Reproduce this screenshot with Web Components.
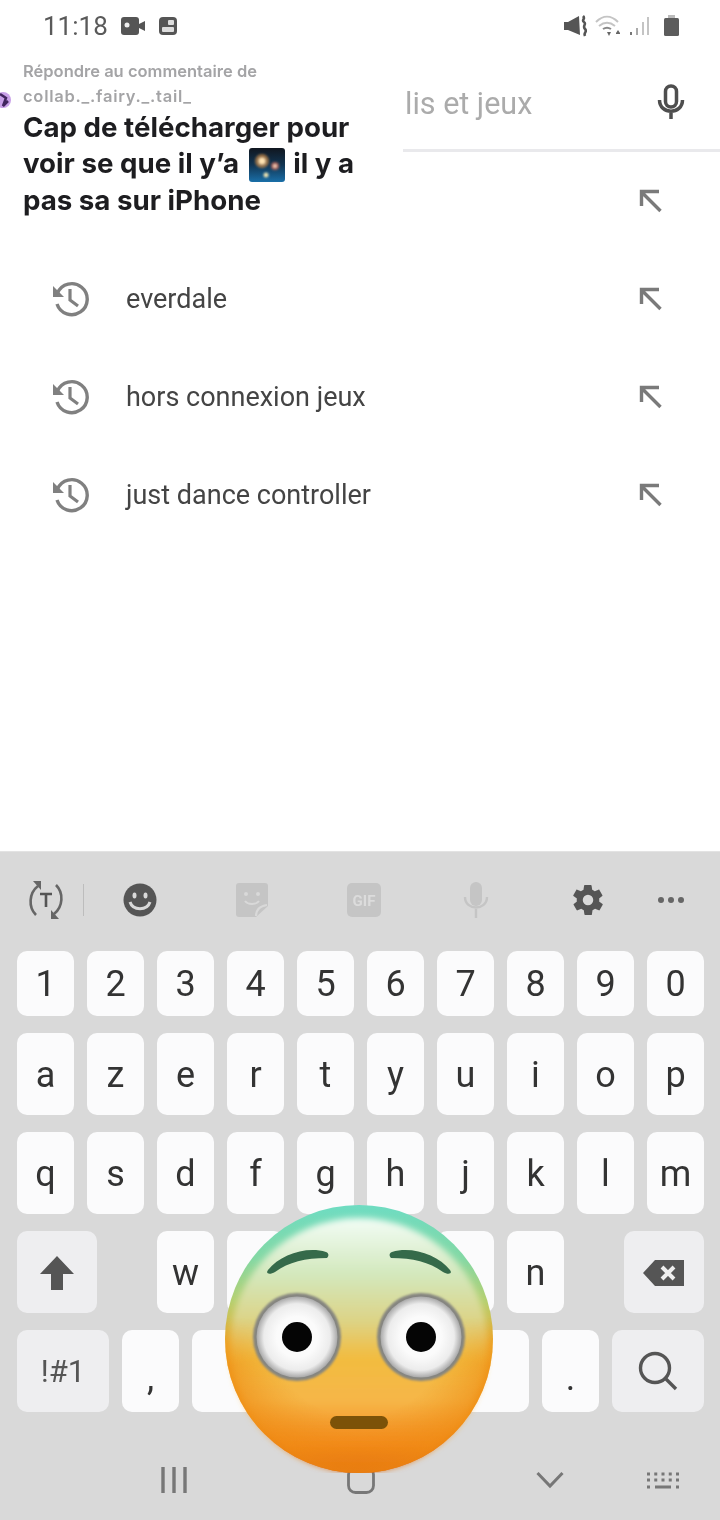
<!DOCTYPE html>
<html>
<head>
<meta charset="utf-8">
<style>
  html, body { margin: 0; padding: 0; background: #fff; }
  body { width: 720px; height: 1520px; overflow: hidden; display: flex; flex-direction: column; position: relative; font-family: Roboto, "Liberation Sans", sans-serif; filter: blur(.45px); }
  key-board { margin-top: auto; }
</style>
</head>
<body>
<status-bar></status-bar>
<search-bar>lis et jeux</search-bar>
<history-row></history-row>
<history-row icon>everdale</history-row>
<history-row icon>hors connexion jeux</history-row>
<history-row icon>just dance controller</history-row>
<key-board></key-board>
<comment-sticker></comment-sticker>
<emoji-face></emoji-face>

<script>
class StatusBar extends HTMLElement {
    constructor() {
        super();
        this.attachShadow({ mode: 'open' });
        this.shadowRoot.innerHTML = `
            <style>
                :host { display: flex; align-items: center; height: 52px; padding: 0 41px 0 43px; color: #555; }
                .time { font-size: 26px; line-height: 1; margin-right: 13px; color: #5a5a5a; }
                svg { display: block; }
                .right { margin-left: auto; display: flex; align-items: center; }
            </style>
            <span class="time">11:18</span>
            <svg width="25" height="18" viewBox="0 0 25 18" style="margin-right:13px">
                <rect x="0" y="0" width="18" height="18" rx="3" fill="#555"/>
                <circle cx="6" cy="8" r="2.5" fill="#eee"/>
                <path d="M18 7l6-3v10l-6-3z" fill="#555"/>
            </svg>
            <svg width="18" height="18" viewBox="0 0 18 18">
                <rect width="18" height="18" rx="4" fill="#555"/>
                <rect x="3" y="10" width="12" height="5" rx="1" fill="#ddd"/>
                <rect x="9" y="3" width="6" height="5" rx="1" fill="#ddd"/>
            </svg>
            <div class="right">
                <svg width="24" height="22" viewBox="0 0 24 22" style="margin-right:8px">
                    <path d="M1 7h4L16 1l1 19L5 15H1z" fill="#555"/>
                    <path d="M20 1c3 3-2 4 1 6s-2 4 1 7-2 3 0 7" fill="none" stroke="#555" stroke-width="2.600"/>
                </svg>
                <svg width="28" height="22" viewBox="0 0 28 22" style="margin-right:6px">
                    <path d="M1 7c7-7 15-7 22 0M4 11c5-4 11-4 16 0" fill="none" stroke="#c4c4c4" stroke-width="2"/>
                    <path d="M8 14c3-2 5-2 8 0" fill="none" stroke="#888" stroke-width="2"/>
                    <path d="M12 17h4l-2 4zM21 18l2-3 2 3zM21 18h4v1h-4z" fill="#666"/>
                </svg>
                <svg width="21" height="22" viewBox="0 0 21 22" style="margin-right:14px">
                    <rect x="1" y="17" width="2" height="3" fill="#777"/>
                    <rect x="7" y="13" width="2" height="7" fill="#aaa"/>
                    <rect x="13" y="7" width="2" height="13" fill="#c4c4c4"/>
                    <rect x="18" y="2" width="2" height="18" fill="#c4c4c4"/>
                </svg>
                <svg width="15" height="22" viewBox="0 0 15 22">
                    <path d="M4 0h7v3H4z" fill="#bbb"/>
                    <rect x="0" y="3" width="15" height="18" rx="1.500" fill="#5c5c5c"/>
                </svg>
            </div>
        `;
    }
}

class SearchBar extends HTMLElement {
    constructor() {
        super();
        this.attachShadow({ mode: 'open' });
        this.shadowRoot.innerHTML = `
            <style>
                :host { display: flex; align-items: center; box-sizing: border-box; height: 100px; margin-left: 403px; padding: 5px 35px 0 2px; border-bottom: 3px solid #e9e9ec; color: #ababab; font-size: 30.500px; }
                svg { margin-left: auto; margin-top: -2px; display: block; }
            </style>
            <slot></slot>
            <svg width="28" height="36" viewBox="0 0 28 36">
                <rect x="8.500" y="2" width="11" height="21" rx="5.500" fill="none" stroke="#4e4e4e" stroke-width="3.500"/>
                <path d="M2.500 16c0 15 23 15 23 0M14 27v8" fill="none" stroke="#4e4e4e" stroke-width="3.500"/>
            </svg>
        `;
    }
}

class HistoryRow extends HTMLElement {
    constructor() {
        super();
        this.attachShadow({ mode: 'open' });
        const clock = this.hasAttribute('icon') ? `
            <svg class="clock" width="38" height="36" viewBox="0 0 38 36">
                <path d="M6.500 12A15.500 15.500 0 1 1 6 23" fill="none" stroke="#808080" stroke-width="3.400"/>
                <path d="M2 5v11h11z" fill="#808080"/>
                <path d="M19 8v11l8 6" fill="none" stroke="#808080" stroke-width="3.200"/>
            </svg>` : '';
        this.shadowRoot.innerHTML = `
            <style>
                :host { display: flex; align-items: center; height: 98px; padding: 0 57px 0 51px; color: #444; font-size: 27px; }
                .clock { width: 38px; margin-right: 37px; flex: none; }
                .go { margin-left: auto; display: block; }
            </style>
            ${clock}
            <slot></slot>
            <svg class="go" width="24" height="24" viewBox="0 0 24 24">
                <path d="M21.500 22L3 3.500M2.500 17V2.500H20" fill="none" stroke="#7a7a7a" stroke-width="3.400"/>
            </svg>
        `;
    }
}

class CommentSticker extends HTMLElement {
    constructor() {
        super();
        this.attachShadow({ mode: 'open' });
        this.shadowRoot.innerHTML = `
            <style>
                :host { display: block; position: absolute; left: 0; top: 56px; width: 403px; height: 160px; background: #fff; box-sizing: border-box; padding: 3px 40px 0 23px; font-family: Inter, Lato, sans-serif; }
                .to { font-size: 16.500px; line-height: 25px; font-weight: 600; color: #a4a4a6; white-space: nowrap; }
                .to span { letter-spacing: .75px; }
                .body { font-size: 27.700px; line-height: 36px; font-weight: 700; color: #1d1d20; white-space: nowrap; }
                .body svg { vertical-align: -9px; margin: 0 2px 0 3px; }
                .avatar { position: absolute; left: -6px; top: 35px; }
            </style>
            <svg class="avatar" width="18" height="18" viewBox="0 0 18 18">
                <circle cx="9" cy="9" r="8" fill="#c8a0e8"/>
                <path d="M6 3l6 4-3 8 5-5" fill="none" stroke="#41255e" stroke-width="2.500"/>
            </svg>
            <div class="to">Répondre au commentaire de<br><span>collab._.fairy._.tail_</span></div>
            <div class="body">Cap de télécharger pour<br>voir se que il y’a <svg width="36" height="34" viewBox="0 0 36 34">
                <defs>
                    <linearGradient id="sky" x1="0" y1="0" x2="0" y2="1"><stop offset="0" stop-color="#10161f"/><stop offset=".5" stop-color="#113553"/><stop offset="1" stop-color="#1a6fa8"/></linearGradient>
                    <filter id="glow"><feGaussianBlur stdDeviation="1.200"/></filter>
                </defs>
                <rect width="36" height="34" rx="3" fill="url(#sky)"/>
                <g filter="url(#glow)">
                    <circle cx="13" cy="13" r="7" fill="#c98a4a" opacity=".7"/>
                    <circle cx="13" cy="13" r="3.500" fill="#ffe2b0"/>
                    <circle cx="26" cy="18" r="4" fill="#c76a5a" opacity=".8"/>
                    <circle cx="26" cy="18" r="1.800" fill="#ffd9c0"/>
                    <circle cx="17" cy="27" r="2.500" fill="#e8e0b0"/>
                </g>
            </svg> il y a<br>pas sa sur iPhone</div>
        `;
    }
}

class KbKey extends HTMLElement {
    constructor() {
        super();
        this.attachShadow({ mode: 'open' });
        this.shadowRoot.innerHTML = `
            <style>
                :host { display: flex; flex: none; align-items: center; justify-content: center; width: 57px; box-sizing: border-box; background: #fbfbfc; border-radius: 10px; color: #333; font-size: 36px; }
                :host([fn]) { background: #eeeef0; color: #555; }
                :host([low]) { align-items: flex-end; padding-bottom: 16px; line-height: 1; }
            </style>
            <slot></slot>
        `;
    }
}

class KeyBoard extends HTMLElement {
    constructor() {
        super();
        this.attachShadow({ mode: 'open' });
        const keys = (s) => s.split('').map((c) => `<kb-key>${c}</kb-key>`).join('');
        this.shadowRoot.innerHTML = `
            <style>
                :host { display: block; height: 669px; background: #d9d9d9; border-top: 1px solid #e3e3e3; box-sizing: border-box; }
                .tools { display: flex; align-items: center; box-sizing: border-box; height: 99px; padding: 0 0 4px 27px; }
                .tools svg { display: block; flex: none; }
                .row { display: flex; gap: 13px; padding: 0 16px 0 17px; height: 82px; margin-bottom: 17px; }
                .row.nums { height: 65px; }
                .row.letters kb-key { padding-top: 2px; }
                .shift, .del { width: 80px; }
                .sym, .srch { width: 92px; }
                .space { width: 337px; }
                .skip { width: 34px; flex: none; }
                .nav { display: flex; align-items: center; height: 90px; margin-top: 23px; }
                .nav svg { display: block; flex: none; }
            </style>
            <div class="tools">
                <svg width="38" height="40" viewBox="0 0 38 40">
                    <path d="M11 6C2 13 1 27 9 35M27 34c9-7 10-21 2-29" fill="none" stroke="#666" stroke-width="2.600"/>
                    <path d="M6 1h8v9zM32 39h-8v-9z" fill="#666"/>
                    <path d="M13 14h12M19 14v13" fill="none" stroke="#555" stroke-width="2.600"/>
                </svg>
                <div style="width:1px;height:32px;background:#bdbdbd;margin:0 39px 0 18px"></div>
                <svg width="34" height="34" viewBox="0 0 34 34" style="margin-right:78px">
                    <circle cx="17" cy="17" r="16.500" fill="#555"/>
                    <ellipse cx="11.500" cy="12.500" rx="2" ry="3" fill="#d9d9d9"/>
                    <ellipse cx="22.500" cy="12.500" rx="2" ry="3" fill="#d9d9d9"/>
                    <path d="M7 19c3 9 17 9 20 0" fill="none" stroke="#d9d9d9" stroke-width="3"/>
                </svg>
                <svg width="34" height="36" viewBox="0 0 34 36" style="margin-right:78px">
                    <path d="M4 1h26a3 3 0 0 1 3 3v20L21 35H4a3 3 0 0 1-3-3V4a3 3 0 0 1 3-3z" fill="#c5c5c5"/>
                    <circle cx="11" cy="12" r="2" fill="#d9d9d9"/><circle cx="23" cy="12" r="2" fill="#d9d9d9"/>
                    <path d="M10 19c3 4 11 4 14 0M21 34c0-6 4-10 11-11" fill="none" stroke="#d9d9d9" stroke-width="2"/>
                </svg>
                <svg width="34" height="34" viewBox="0 0 34 34" style="margin-right:81px">
                    <rect width="34" height="34" rx="5" fill="#c5c5c5"/>
                    <text x="17" y="23" text-anchor="middle" font-family="Roboto, sans-serif" font-weight="700" font-size="15" fill="#dcdcdc">GIF</text>
                </svg>
                <svg width="28" height="36" viewBox="0 0 28 36" style="margin-right:80px">
                    <rect x="8" y="0" width="12" height="24" rx="6" fill="#c5c5c5"/>
                    <path d="M3 15c0 14 22 14 22 0M14 27v9" fill="none" stroke="#c5c5c5" stroke-width="2.400"/>
                </svg>
                <svg width="36" height="36" viewBox="0 0 24 24" style="margin-right:51px">
                    <path fill="#555" d="M19.400 13c.1-.3.1-.7.1-1s0-.7-.1-1l2.100-1.600c.2-.2.2-.4.100-.6l-2-3.500c-.1-.2-.4-.3-.6-.2l-2.500 1c-.5-.4-1.100-.7-1.700-1l-.4-2.600c0-.3-.2-.5-.5-.5h-4c-.3 0-.5.2-.5.400l-.4 2.700c-.6.200-1.200.6-1.700 1l-2.500-1c-.2-.1-.5 0-.6.200l-2 3.500c-.1.200-.1.400.1.600L4.600 11c-.1.300-.1.700-.1 1s0 .7.100 1l-2.100 1.600c-.2.200-.2.400-.1.600l2 3.500c.1.200.4.300.6.200l2.500-1c.5.400 1.100.7 1.700 1l.4 2.600c0 .3.200.5.500.5h4c.3 0 .5-.2.500-.4l.4-2.700c.6-.2 1.200-.6 1.700-1l2.500 1c.2.100.5 0 .6-.2l2-3.500c.1-.2.1-.4-.1-.6zM12 15.500a3.500 3.500 0 1 1 0-7 3.500 3.500 0 0 1 0 7z"/>
                </svg>
                <svg width="28" height="8" viewBox="0 0 28 8">
                    <circle cx="4" cy="4" r="3" fill="#666"/><circle cx="14" cy="4" r="3" fill="#666"/><circle cx="24" cy="4" r="3" fill="#666"/>
                </svg>
            </div>
            <div class="row nums">${keys('1234567890')}</div>
            <div class="row letters">${keys('azertyuiop')}</div>
            <div class="row letters">${keys('qsdfghjklm')}</div>
            <div class="row letters">
                <kb-key fn class="shift">
                    <svg width="36" height="36" viewBox="0 0 36 36"><path d="M18 1L1 19h11v16h12V19h11z" fill="#555"/></svg>
                </kb-key>
                <div class="skip"></div>
                <kb-key>w</kb-key>
                <kb-key></kb-key><kb-key></kb-key><kb-key></kb-key><kb-key></kb-key>
                <kb-key>n</kb-key>
                <div class="skip"></div>
                <kb-key fn class="del">
                    <svg width="42" height="26" viewBox="0 0 42 26"><path d="M12 0h29v26H12L0 13z" fill="#555"/><path d="M19 7l12 12M31 7L19 19" fill="none" stroke="#eee" stroke-width="4"/></svg>
                </kb-key>
            </div>
            <div class="row">
                <kb-key fn class="sym" style="font-size:31px">!#1</kb-key>
                <kb-key low>,</kb-key>
                <kb-key class="space"></kb-key>
                <kb-key low>.</kb-key>
                <kb-key fn class="srch">
                    <svg width="40" height="40" viewBox="0 0 40 40"><circle cx="17" cy="17" r="14.500" fill="none" stroke="#555" stroke-width="3.400"/><path d="M27 27l11 11" fill="none" stroke="#555" stroke-width="3.400"/></svg>
                </kb-key>
            </div>
            <div class="nav">
                <svg width="26" height="26" viewBox="0 0 26 26" style="margin-left:161px">
                    <path d="M2 0v26M13 0v26M24 0v26" fill="none" stroke="#777" stroke-width="3.400"/>
                </svg>
                <svg width="28" height="28" viewBox="0 0 28 28" style="margin-left:160px">
                    <rect x="1.500" y="1.500" width="25" height="25" rx="7" fill="none" stroke="#777" stroke-width="2.800"/>
                </svg>
                <svg width="28" height="18" viewBox="0 0 28 18" style="margin-left:161px">
                    <path d="M1.500 2L14 15 26.500 2" fill="none" stroke="#777" stroke-width="3"/>
                </svg>
                <svg width="34" height="18" viewBox="0 0 34 18" style="margin-left:82px">
                    <path d="M1 3h32M1 9h32" fill="none" stroke="#777" stroke-width="3" stroke-dasharray="3 4.250"/>
                    <path d="M1 16h3M9 16h16M30 16h3" fill="none" stroke="#777" stroke-width="3"/>
                </svg>
            </div>
        `;
    }
}

class EmojiFace extends HTMLElement {
    constructor() {
        super();
        this.attachShadow({ mode: 'open' });
        const eye = (x) => `
            <circle cx="${x}" cy="1337" r="44" fill="#858580" filter="url(#edge)"/>
            <circle cx="${x}" cy="1337" r="40.500" fill="url(#ball)"/>
            <circle cx="${x}" cy="1337" r="15" fill="#050505"/>`;
        this.shadowRoot.innerHTML = `
            <style>
                :host { display: block; position: absolute; left: 225px; top: 1205px; width: 268px; height: 268px; }
                svg { display: block; }
            </style>
            <svg width="268" height="268" viewBox="225 1205 268 268">
                <defs>
                    <linearGradient id="rim" x1="0" y1="0" x2="0" y2="1">
                        <stop offset="0" stop-color="#6edcc2"/>
                        <stop offset=".2" stop-color="#84d8a4"/>
                        <stop offset=".36" stop-color="#b5cf6e"/>
                        <stop offset=".52" stop-color="#eeaa2a"/>
                        <stop offset=".8" stop-color="#f59a1e"/>
                        <stop offset="1" stop-color="#d95a0c"/>
                    </linearGradient>
                    <linearGradient id="skin" x1="0" y1="0" x2="0" y2="1">
                        <stop offset="0" stop-color="#f2fdf6"/>
                        <stop offset=".22" stop-color="#d3e8bd"/>
                        <stop offset=".4" stop-color="#dcd488"/>
                        <stop offset=".55" stop-color="#f2bc40"/>
                        <stop offset=".72" stop-color="#f6b648"/>
                        <stop offset=".9" stop-color="#f4871a"/>
                        <stop offset="1" stop-color="#da5c0c"/>
                    </linearGradient>
                    <radialGradient id="ball">
                        <stop offset=".5" stop-color="#fbfbfb"/>
                        <stop offset=".82" stop-color="#ececec"/>
                        <stop offset="1" stop-color="#a9a9a9"/>
                    </radialGradient>
                    <radialGradient id="shade" cx=".5" cy=".45" r=".55">
                        <stop offset=".62" stop-color="#ee9015" stop-opacity="0"/>
                        <stop offset="1" stop-color="#ee8a12" stop-opacity=".75"/>
                    </radialGradient>
                    <linearGradient id="lower" x1="0" y1="0" x2="0" y2="1">
                        <stop offset=".42" stop-color="#fff" stop-opacity="0"/>
                        <stop offset=".6" stop-color="#fff"/>
                    </linearGradient>
                    <mask id="lowerMask"><rect x="225" y="1205" width="268" height="268" fill="url(#lower)"/></mask>
                    <filter id="soft"><feGaussianBlur stdDeviation="3"/></filter>
                    <filter id="edge"><feGaussianBlur stdDeviation="1"/></filter>
                </defs>
                <circle cx="359" cy="1339" r="134" fill="url(#rim)"/>
                <ellipse cx="359" cy="1345" rx="129" ry="127" fill="url(#skin)" filter="url(#soft)"/>
                <circle cx="359" cy="1339" r="134" fill="url(#shade)" mask="url(#lowerMask)"/>
                ${eye(297)}
                ${eye(421)}
                <path d="M268 1270c12-15 38-24 58-18 3 1 3 4 1 6-22 0-38 4-52 14-5 3-10 2-7-2z" fill="#356a4a"/>
                <path d="M450 1270c-12-15-38-24-58-18-3 1-3 4-1 6 22 0 38 4 52 14 5 3 10 2 7-2z" fill="#356a4a"/>
                <rect x="330" y="1416" width="58" height="13" rx="6.500" fill="#7c5208"/>
            </svg>
        `;
    }
}

customElements.define('status-bar', StatusBar);
customElements.define('search-bar', SearchBar);
customElements.define('history-row', HistoryRow);
customElements.define('comment-sticker', CommentSticker);
customElements.define('kb-key', KbKey);
customElements.define('key-board', KeyBoard);
customElements.define('emoji-face', EmojiFace);
</script>
</body>
</html>
